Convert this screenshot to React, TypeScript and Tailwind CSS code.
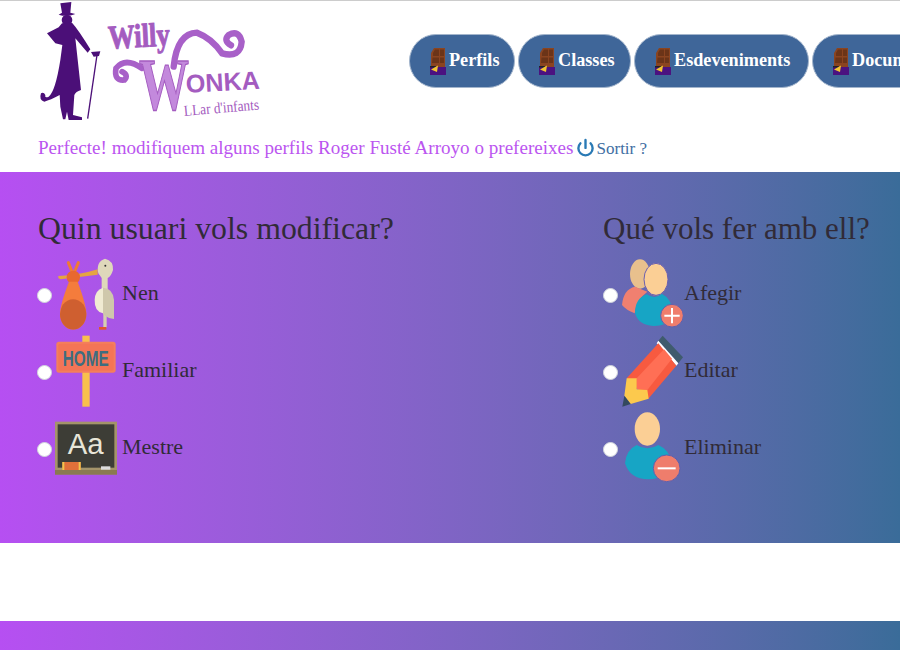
const navItems = ['Perfils', 'Classes', 'Esdeveniments', 'Documents'];

const navWidths: Record<string, string> = {
  Perfils: 'w-[106px]',
  Classes: 'w-[113px]',
  Esdeveniments: 'w-[175px]',
  Documents: 'w-[150px]',
};

const Logo = () => (
  <svg viewBox="110 3 684 366" className="w-[228px] h-[122px] shrink-0 overflow-visible">
    {/* Silhouette */}
    <g fill="#4b0f78">
      <path d="M180 10 L213 6 L210 38 L225 42 Q200 52 175 44 L185 38 Z" />
      <ellipse cx="200" cy="60" rx="16" ry="16" />
      <path d="M185 70 L215 68 Q235 90 270 148 L262 158 L225 115 L242 270 Q226 275 222 285 L218 345 L245 352 L245 360 L205 360 L200 335 L195 358 L188 358 L180 320 L178 285 Q150 300 132 305 Q115 300 122 280 Q130 275 135 285 Q132 295 145 290 Q165 275 180 180 L186 135 L165 130 L140 100 L175 82 Z" />
      <path d="M272 156 L300 154 L296 168 L280 170 Z" />
    </g>
    <line x1="290" y1="165" x2="262" y2="356" stroke="#4b0f78" strokeWidth="4" />
    {/* Swirls */}
    <g fill="none" stroke="#a860c8" strokeLinecap="round">
      <path d="M520 200 Q530 100 590 98 Q635 115 665 160 Q720 175 724 125 Q715 88 685 105 Q668 122 692 136" strokeWidth="19" />
      <path d="M425 205 Q375 170 347 205 Q340 243 372 240 Q386 225 365 215" strokeWidth="17" />
    </g>
    {/* Wordmark */}
    <g fontFamily="'Liberation Serif', serif" fill="#a45cc0">
      <text x="325" y="146" fontSize="100" fontWeight="700" transform="rotate(-3 325 146)" stroke="#a45cc0" strokeWidth="3" textLength="185" lengthAdjust="spacingAndGlyphs">
        Willy
      </text>
      <text x="416" y="330" fontSize="225" fontWeight="700" fill="#c389dc" stroke="#a45cc0" strokeWidth="4" textLength="150" lengthAdjust="spacingAndGlyphs">
        W
      </text>
      <text x="558" y="278" fontSize="76" fontWeight="700" transform="rotate(-3 558 278)" fontFamily="'Liberation Sans', sans-serif" textLength="222" lengthAdjust="spacingAndGlyphs">
        ONKA
      </text>
      <text x="552" y="348" fontSize="46" transform="rotate(-5 552 348)" textLength="226" lengthAdjust="spacingAndGlyphs">
        LLar d'infants
      </text>
    </g>
  </svg>
);

const Chocolate = () => (
  <svg viewBox="0 0 16 27" className="w-4 h-[27px] shrink-0">
    <path d="M4 0 H15 V20 H1 V5 Z" fill="#8a4420" />
    <path d="M5 1.5 H9 V8 H3 V5 Z M10 1.5 H14 V8 H10 Z M2.5 9.5 H9 V15 H2 Z M10 9.5 H14 V15 H10 Z" fill="#6b3418" />
    <rect x="0" y="19" width="16" height="8" fill="#4b1280" />
    <rect x="0" y="18" width="6" height="1.5" fill="#222" />
    <path d="M1 21.5 L8 17.5 L7 24 Z" fill="#f2c531" />
  </svg>
);

const Stork = () => (
  <svg viewBox="108 21 192 231" className="w-16 h-[77px] shrink-0">
    <path d="M118 78 Q180 76 236 58 L236 74 L125 88 Q116 86 118 78 Z" fill="#e5a541" />
    <path d="M148 38 L162 72 M178 38 L164 72" stroke="#f07a35" strokeWidth="9" strokeLinecap="round" />
    <circle cx="163" cy="82" r="20" fill="#e8682f" />
    <path d="M150 95 L176 95 Q202 165 202 192 A39 46 0 0 1 123 192 Q123 165 150 95 Z" fill="#f47c3c" />
    <path d="M123 192 Q124 178 131 164 Q162 132 194 164 Q202 178 202 192 A39 46 0 0 1 123 192 Z" fill="#cf5f30" />
    <path d="M238 70 Q230 35 258 26 Q284 32 282 60 Q276 80 266 84 L266 120 L248 120 L248 84 Z" fill="#dfd8bb" />
    <circle cx="259" cy="47" r="3" fill="#333" />
    <rect x="253" y="170" width="10" height="62" fill="#d5cfb0" />
    <rect x="240" y="231" width="22" height="8" fill="#e0562c" />
    <path d="M252 113 L252 190 Q226 185 227 150 Q228 120 252 113 Z" fill="#f0ebd2" />
    <path d="M252 113 Q282 115 285 150 L285 207 L270 204 Q252 195 252 190 Z" fill="#cfc8ab" />
  </svg>
);

const Home = () => (
  <svg viewBox="108 252 192 231" className="w-16 h-[77px] shrink-0">
    <rect x="190" y="257" width="22" height="213" fill="#f9c04c" />
    <rect x="112" y="275" width="178" height="93" rx="8" fill="#f47f5c" />
    <rect x="118" y="281" width="166" height="81" rx="5" fill="#f47556" />
    <text x="131" y="347" fontFamily="'Liberation Sans', sans-serif" fontWeight="700" fontSize="66" fill="#3f6d80" textLength="138" lengthAdjust="spacingAndGlyphs">
      HOME
    </text>
  </svg>
);

const Board = () => (
  <svg viewBox="108 483 192 231" className="w-16 h-[77px] shrink-0">
    <rect x="108" y="515" width="186" height="158" fill="#a4946a" />
    <rect x="116" y="523" width="170" height="130" fill="#3d3d36" />
    <rect x="108" y="660" width="186" height="14" fill="#8a7a50" />
    <text x="200" y="612" textAnchor="middle" fontFamily="'Liberation Sans', sans-serif" fontSize="88" fill="#e8e6d8">
      Aa
    </text>
    <rect x="130" y="636" width="55" height="24" fill="#e0703a" />
    <rect x="130" y="636" width="6" height="24" fill="#f1c54e" />
    <rect x="179" y="636" width="6" height="24" fill="#f1c54e" />
    <rect x="246" y="649" width="28" height="10" fill="#ddd" />
  </svg>
);

const AddUser = () => (
  <svg viewBox="93 21 186 231" className="w-[62px] h-[77px] shrink-0">
    <ellipse cx="150" cy="72" rx="30" ry="44" fill="#e8c08d" />
    <path d="M96 165 Q100 118 135 110 L172 125 Q138 150 134 190 Q108 180 96 165 Z" fill="#f08070" />
    <path d="M135 190 Q135 145 170 133 Q195 150 215 131 Q245 145 250 190 Q240 228 190 228 Q145 225 135 190 Z" fill="#17a5c5" />
    <ellipse cx="198" cy="88" rx="36" ry="48" fill="#fbcf95" stroke="#6a5fb0" strokeWidth="3" />
    <circle cx="246" cy="197" r="34" fill="#ef7d6c" stroke="#5f60ae" strokeWidth="3" />
    <path d="M246 174 V220 M223 197 H269" stroke="#fff" strokeWidth="6" />
  </svg>
);

const Pencil = () => (
  <svg viewBox="93 252 186 231" className="w-[62px] h-[77px] shrink-0">
    <path d="M218 257 L279 322 L265 340 L205 272 Z" fill="#3f5b6d" />
    <path d="M205 272 L265 340 L259 347 L200 280 Z" fill="#fff" />
    <path d="M205 280 L259 347 L175 446 L110 385 Z" fill="#f75a40" />
    <path d="M222 298 L246 326 L172 420 L140 418 L140 385 Z" fill="#ff6f55" />
    <path d="M110 385 L140 385 L140 418 L172 420 L176 446 L122 462 L103 437 Z" fill="#fcc94d" />
    <path d="M97 470 L103 437 L122 462 Z" fill="#34495e" />
  </svg>
);

const RemoveUser = () => (
  <svg viewBox="93 483 186 231" className="w-[62px] h-[77px] shrink-0">
    <path d="M105 640 Q108 600 140 585 Q172 605 205 585 Q240 600 245 640 Q230 688 175 688 Q120 688 105 640 Z" fill="#17a5c5" />
    <ellipse cx="172" cy="537" rx="38" ry="50" fill="#fbcf95" />
    <circle cx="230" cy="655" r="40" fill="#ef7d6c" stroke="#5f60ae" strokeWidth="3" />
    <path d="M203 655 H257" stroke="#fff" strokeWidth="6" />
  </svg>
);

const Option = ({ icon, label, labelClass }: { icon: React.ReactNode; label: string; labelClass: string }) => (
  <label className="flex items-center h-[77px]">
    <input type="radio" name="opt" className="appearance-none w-[15px] h-[15px] mr-[3px] shrink-0 rounded-full bg-white border border-gray-300" />
    {icon}
    <span className={`-mt-[6px] ${labelClass} text-[22px] text-[#312b38]`}>{label}</span>
  </label>
);

const App = () => {
  return (
    <div className="w-[900px] h-[650px] overflow-hidden bg-white border-t border-[#cccccc] font-['Liberation_Serif',serif]">
      {/* Header */}
      <header className="flex items-start h-[130px] pl-[37px]">
        <Logo />
        <nav className="flex gap-[3px] mt-[33px] ml-[144px] shrink-0">
          {navItems.map((item) => (
            <a
              key={item}
              className={`${navWidths[item]} h-[54px] shrink-0 flex items-center gap-[3px] pl-5 rounded-[27px] bg-[#3f6699] border border-[#a3b5cc] text-white text-[18.2px] font-bold`}
            >
              <Chocolate />
              <span>{item}</span>
            </a>
          ))}
        </nav>
      </header>

      {/* Greeting */}
      <div className="flex items-center h-[35px] mb-[6px] pl-[38px] text-[19.1px] text-[#bb55f0]">
        <span>Perfecte! modifiquem alguns perfils Roger Fusté Arroyo o prefereixes</span>
        <svg viewBox="0 0 24 24" className="w-[19px] h-[19px] ml-[2px] -mt-0.5" fill="none" stroke="#2a7ab5" strokeWidth="3" strokeLinecap="round">
          <path d="M12 2.5v10" />
          <path d="M18.4 6.6a9 9 0 1 1-12.8 0" />
        </svg>
        <span className="ml-[2px] text-[17px] text-[#3f6fa3]">Sortir ?</span>
      </div>

      {/* Form */}
      <section className="flex h-[371px] pl-[37px] pt-[39px] bg-gradient-to-r from-[#b64ff2] to-[#3a6c99]">
        <div className="w-[566px] shrink-0">
          <h2 className="h-[46px] pl-px text-[31.8px] leading-9 text-[#312b38]">Quin usuari vols modificar?</h2>
          <Option icon={<Stork />} label="Nen" labelClass="ml-[3px]" />
          <Option icon={<Home />} label="Familiar" labelClass="ml-[3px]" />
          <Option icon={<Board />} label="Mestre" labelClass="ml-[3px]" />
        </div>
        <div>
          <h2 className="h-[46px] text-[31px] leading-9 text-[#312b38] whitespace-nowrap">Qué vols fer amb ell?</h2>
          <Option icon={<AddUser />} label="Afegir" labelClass="ml-px" />
          <Option icon={<Pencil />} label="Editar" labelClass="ml-px" />
          <Option icon={<RemoveUser />} label="Eliminar" labelClass="ml-px" />
        </div>
      </section>

      {/* Footer */}
      <div className="h-[78px]" />
      <div className="h-[29px] bg-gradient-to-r from-[#b64ff2] to-[#3a6c99]" />
    </div>
  );
};

export default App;
